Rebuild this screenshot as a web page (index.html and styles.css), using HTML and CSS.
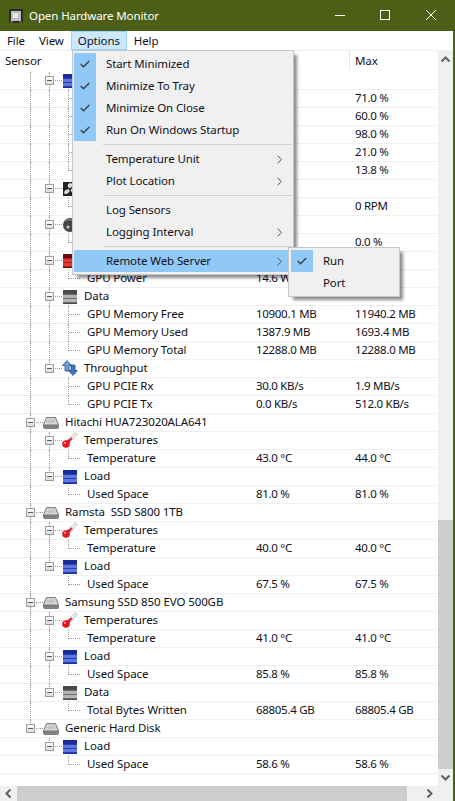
FILE: index.html
```html
<!DOCTYPE html>
<html lang="en">
<head>
    <meta charset="UTF-8">
    <title>Open Hardware Monitor</title>
    <link rel="stylesheet" href="styles.css">
</head>
<body>

<svg class="defs" width="0" height="0">
    <symbol id="load" viewBox="0 0 14 14">
        <rect width="14" height="14" fill="#1a2c98"/>
        <path d="M0 6.5h14M0 10.5h14" stroke="#5f78e0" stroke-width="3"/>
        <path d="M0 4.5h14M0 8.5h14M0 12.5h14" stroke="#2a3fb0"/>
    </symbol>
    <symbol id="data" viewBox="0 0 14 14">
        <rect width="14" height="14" fill="#4a4a4a"/>
        <path d="M0 6.5h14M0 10.5h14" stroke="#b4b4b0" stroke-width="3"/>
        <path d="M0 4.5h14M0 8.5h14M0 12.5h14" stroke="#6c6c6c"/>
    </symbol>
    <symbol id="power" viewBox="0 0 14 14">
        <rect width="14" height="14" fill="#6a0c0c"/>
        <path d="M0 6.5h14M0 10.5h14" stroke="#e03c3c" stroke-width="3"/>
        <path d="M0 4.5h14M0 8.5h14M0 12.5h14" stroke="#a51c1c"/>
    </symbol>
    <symbol id="fan" viewBox="0 0 14 14">
        <rect width="14" height="14" fill="#222"/>
        <path d="M7 7C4 5 4 2 7 1c3 0 3 3 0 6zM7 7c3-1 5 0 6 3-1 3-4 2-6-3zM7 7c0 3-2 5-5 5-2-2 0-5 5-5z" fill="#ddd"/>
        <circle cx="7" cy="7" r="1.2" fill="#222"/>
    </symbol>
    <symbol id="ctrl" viewBox="0 0 14 14">
        <circle cx="7" cy="7" r="7" fill="#454545"/>
        <path d="M1 4a7 7 0 0 1 12 0 9 5 0 0 0-12 0z" fill="#777"/>
        <circle cx="5" cy="9" r="1.5" fill="#cfcfcf"/>
    </symbol>
    <symbol id="thru" viewBox="0 0 16 16">
        <path d="M5 .5 9.500 5.500H7V11H3V5.500H.5z" fill="#6f9fd8" stroke="#1f4f8c" stroke-width=".8"/>
        <path d="M11 15.500 6.500 10.500H9V5h4v5.500h2.500z" fill="#3f78bd" stroke="#1f4f8c" stroke-width=".8"/>
    </symbol>
    <symbol id="temp" viewBox="0 0 16 16">
        <path d="M4.500 8.500 12.800 1c1.200-.8 2.800.7 2 1.900L7.500 11.500z" fill="#f0ecec" stroke="#bdb2b2" stroke-width=".7"/>
        <path d="M4.500 9 9.500 5.500l1 1L7 11z" fill="#d9202a"/>
        <circle cx="4" cy="12" r="3.800" fill="#e0141e"/>
        <circle cx="3" cy="10.800" r="1.100" fill="#f59a9a"/>
    </symbol>
    <symbol id="disk" viewBox="0 0 16 12">
        <path d="M3.500.5h9L15.500 7.500v3a1 1 0 0 1-1 1h-13a1 1 0 0 1-1-1v-3z" fill="#a8a8a8" stroke="#6a6a6a" stroke-width=".8"/>
        <path d="M4 1.200h8l2.500 5.800h-13z" fill="#dcdcdc"/>
        <ellipse cx="8" cy="4.200" rx="4.500" ry="2" fill="#c4c4c4"/>
        <path d="M1 8h14v2.800H1z" fill="#7c7c7c"/>
    </symbol>
    <symbol id="check" viewBox="0 0 10 8">
        <path d="M.7 4l2.800 2.800L9.300 1" fill="none" stroke="#3c4048" stroke-width="1.400"/>
    </symbol>
    <symbol id="more" viewBox="0 0 5 9">
        <path d="M.7.7l3.600 3.800L.7 8.300" fill="none" stroke="#555" stroke-width="1"/>
    </symbol>
</svg>

<div class="win">
    <header class="titlebar">
        <svg class="appicon" width="14" height="14" viewBox="0 0 14 14">
            <rect width="14" height="14" fill="#2b2b26"/>
            <rect x="2" y="2" width="10" height="10" fill="#bdbdbd"/>
            <rect x="4" y="4" width="5" height="5" fill="#e8e8e8"/>
            <path d="M1 13h3M10 13h3" stroke="#a08a2c"/>
        </svg>
        <span class="apptitle">Open Hardware Monitor</span>
        <div class="winbtns">
            <svg class="winbtn" width="46" height="31" viewBox="0 0 46 31"><path d="M18 15.500h10" stroke="#fff"/></svg>
            <svg class="winbtn" width="46" height="31" viewBox="0 0 46 31"><rect x="17.500" y="10.500" width="9" height="9" fill="none" stroke="#fff"/></svg>
            <svg class="winbtn" width="46" height="31" viewBox="0 0 46 31"><path d="M17 10l10 10M27 10l-10 10" stroke="#fff"/></svg>
        </div>
    </header>

    <nav class="menubar">
        <span class="mitem">File</span>
        <span class="mitem">View</span>
        <span class="mitem mopen">Options</span>
        <span class="mitem">Help</span>
    </nav>

    <div class="body">
        <div class="list">
            <div class="listhead">
                <span class="hname">Sensor</span>
                <span class="hval"></span>
                <span class="hmax">Max</span>
            </div>

            <div class="row"><div class="name"><i class="g"></i><i class="nd"><b class="tg"></b></i><svg class="ic"><use href="#load"/></svg></div><span class="val"></span><span class="val"></span></div>
            <div class="row"><div class="name"><i class="g"></i><i class="g"></i><i class="g t"></i></div><span class="val"></span><span class="val">71.0 %</span></div>
            <div class="row"><div class="name"><i class="g"></i><i class="g"></i><i class="g t"></i></div><span class="val"></span><span class="val">60.0 %</span></div>
            <div class="row"><div class="name"><i class="g"></i><i class="g"></i><i class="g t"></i></div><span class="val"></span><span class="val">98.0 %</span></div>
            <div class="row"><div class="name"><i class="g"></i><i class="g"></i><i class="g t"></i></div><span class="val"></span><span class="val">21.0 %</span></div>
            <div class="row"><div class="name"><i class="g"></i><i class="g"></i><i class="g l"></i></div><span class="val"></span><span class="val">13.8 %</span></div>
            <div class="row"><div class="name"><i class="g"></i><i class="nd"><b class="tg"></b></i><svg class="ic"><use href="#fan"/></svg></div><span class="val"></span><span class="val"></span></div>
            <div class="row"><div class="name"><i class="g"></i><i class="g"></i><i class="g l"></i></div><span class="val"></span><span class="val">0 RPM</span></div>
            <div class="row"><div class="name"><i class="g"></i><i class="nd"><b class="tg"></b></i><svg class="ic"><use href="#ctrl"/></svg></div><span class="val"></span><span class="val"></span></div>
            <div class="row"><div class="name"><i class="g"></i><i class="g"></i><i class="g l"></i></div><span class="val"></span><span class="val">0.0 %</span></div>
            <div class="row"><div class="name"><i class="g"></i><i class="nd"><b class="tg"></b></i><svg class="ic"><use href="#power"/></svg></div><span class="val"></span><span class="val"></span></div>
            <div class="row"><div class="name"><i class="g"></i><i class="g"></i><i class="g l"></i>GPU Power</div><span class="val">14.6 W</span><span class="val"></span></div>
            <div class="row"><div class="name"><i class="g"></i><i class="nd"><b class="tg"></b></i><svg class="ic"><use href="#data"/></svg><span class="grp">Data</span></div><span class="val"></span><span class="val"></span></div>
            <div class="row"><div class="name"><i class="g"></i><i class="g"></i><i class="g t"></i>GPU Memory Free</div><span class="val">10900.1 MB</span><span class="val">11940.2 MB</span></div>
            <div class="row"><div class="name"><i class="g"></i><i class="g"></i><i class="g t"></i>GPU Memory Used</div><span class="val">1387.9 MB</span><span class="val">1693.4 MB</span></div>
            <div class="row"><div class="name"><i class="g"></i><i class="g"></i><i class="g l"></i>GPU Memory Total</div><span class="val">12288.0 MB</span><span class="val">12288.0 MB</span></div>
            <div class="row"><div class="name"><i class="g"></i><i class="nd end"><b class="tg"></b></i><svg class="ic wide"><use href="#thru"/></svg><span class="grp near">Throughput</span></div><span class="val"></span><span class="val"></span></div>
            <div class="row"><div class="name"><i class="g"></i><i class="g no"></i><i class="g t"></i>GPU PCIE Rx</div><span class="val">30.0 KB/s</span><span class="val">1.9 MB/s</span></div>
            <div class="row"><div class="name"><i class="g"></i><i class="g no"></i><i class="g l"></i>GPU PCIE Tx</div><span class="val">0.0 KB/s</span><span class="val">512.0 KB/s</span></div>

            <div class="row"><div class="name"><i class="nd top"><b class="tg"></b></i><svg class="ic dk"><use href="#disk"/></svg><span class="dsk">Hitachi HUA723020ALA641</span></div><span class="val"></span><span class="val"></span></div>
            <div class="row"><div class="name"><i class="g"></i><i class="nd"><b class="tg"></b></i><svg class="ic wide"><use href="#temp"/></svg><span class="grp near">Temperatures</span></div><span class="val"></span><span class="val"></span></div>
            <div class="row"><div class="name"><i class="g"></i><i class="g"></i><i class="g l"></i>Temperature</div><span class="val">43.0 °C</span><span class="val">44.0 °C</span></div>
            <div class="row"><div class="name"><i class="g"></i><i class="nd end"><b class="tg"></b></i><svg class="ic"><use href="#load"/></svg><span class="grp">Load</span></div><span class="val"></span><span class="val"></span></div>
            <div class="row"><div class="name"><i class="g"></i><i class="g no"></i><i class="g l"></i>Used Space</div><span class="val">81.0 %</span><span class="val">81.0 %</span></div>

            <div class="row"><div class="name"><i class="nd top"><b class="tg"></b></i><svg class="ic dk"><use href="#disk"/></svg><span class="dsk">Ramsta &nbsp;SSD S800 1TB</span></div><span class="val"></span><span class="val"></span></div>
            <div class="row"><div class="name"><i class="g"></i><i class="nd"><b class="tg"></b></i><svg class="ic wide"><use href="#temp"/></svg><span class="grp near">Temperatures</span></div><span class="val"></span><span class="val"></span></div>
            <div class="row"><div class="name"><i class="g"></i><i class="g"></i><i class="g l"></i>Temperature</div><span class="val">40.0 °C</span><span class="val">40.0 °C</span></div>
            <div class="row"><div class="name"><i class="g"></i><i class="nd end"><b class="tg"></b></i><svg class="ic"><use href="#load"/></svg><span class="grp">Load</span></div><span class="val"></span><span class="val"></span></div>
            <div class="row"><div class="name"><i class="g"></i><i class="g no"></i><i class="g l"></i>Used Space</div><span class="val">67.5 %</span><span class="val">67.5 %</span></div>

            <div class="row"><div class="name"><i class="nd top"><b class="tg"></b></i><svg class="ic dk"><use href="#disk"/></svg><span class="dsk">Samsung SSD 850 EVO 500GB</span></div><span class="val"></span><span class="val"></span></div>
            <div class="row"><div class="name"><i class="g"></i><i class="nd"><b class="tg"></b></i><svg class="ic wide"><use href="#temp"/></svg><span class="grp near">Temperatures</span></div><span class="val"></span><span class="val"></span></div>
            <div class="row"><div class="name"><i class="g"></i><i class="g"></i><i class="g l"></i>Temperature</div><span class="val">41.0 °C</span><span class="val">41.0 °C</span></div>
            <div class="row"><div class="name"><i class="g"></i><i class="nd"><b class="tg"></b></i><svg class="ic"><use href="#load"/></svg><span class="grp">Load</span></div><span class="val"></span><span class="val"></span></div>
            <div class="row"><div class="name"><i class="g"></i><i class="g"></i><i class="g l"></i>Used Space</div><span class="val">85.8 %</span><span class="val">85.8 %</span></div>
            <div class="row"><div class="name"><i class="g"></i><i class="nd end"><b class="tg"></b></i><svg class="ic"><use href="#data"/></svg><span class="grp">Data</span></div><span class="val"></span><span class="val"></span></div>
            <div class="row"><div class="name"><i class="g"></i><i class="g no"></i><i class="g l"></i>Total Bytes Written</div><span class="val">68805.4 GB</span><span class="val">68805.4 GB</span></div>

            <div class="row"><div class="name"><i class="nd top end"><b class="tg"></b></i><svg class="ic dk"><use href="#disk"/></svg><span class="dsk">Generic Hard Disk</span></div><span class="val"></span><span class="val"></span></div>
            <div class="row"><div class="name"><i class="g no"></i><i class="nd end"><b class="tg"></b></i><svg class="ic"><use href="#load"/></svg><span class="grp">Load</span></div><span class="val"></span><span class="val"></span></div>
            <div class="row"><div class="name"><i class="g no"></i><i class="g no"></i><i class="g l"></i>Used Space</div><span class="val">58.6 %</span><span class="val">58.6 %</span></div>
        </div>

        <div class="vbar">
            <svg class="sarrow" width="15" height="17" viewBox="0 0 15 17"><path d="M3.500 10.500l4-4 4 4" fill="none" stroke="#606060" stroke-width="2"/></svg>
            <div class="vspace"></div>
            <div class="vthumb"></div>
            <svg class="sarrow" width="15" height="17" viewBox="0 0 15 17"><path d="M3.500 6.500l4 4 4-4" fill="none" stroke="#606060" stroke-width="2"/></svg>
        </div>
    </div>

    <div class="hbar">
        <svg class="sarrow" width="17" height="15" viewBox="0 0 17 15"><path d="M10.500 3.500l-4 4 4 4" fill="none" stroke="#606060" stroke-width="2"/></svg>
        <div class="hthumb"></div>
        <div class="hspace"></div>
        <svg class="sarrow" width="17" height="15" viewBox="0 0 17 15"><path d="M6.500 3.500l4 4-4 4" fill="none" stroke="#606060" stroke-width="2"/></svg>
        <div class="corner"></div>
    </div>

    <div class="menu optionsmenu">
        <div class="opt"><span class="tick"><svg width="10" height="8"><use href="#check"/></svg></span>Start Minimized</div>
        <div class="opt"><span class="tick"><svg width="10" height="8"><use href="#check"/></svg></span>Minimize To Tray</div>
        <div class="opt"><span class="tick"><svg width="10" height="8"><use href="#check"/></svg></span>Minimize On Close</div>
        <div class="opt"><span class="tick"><svg width="10" height="8"><use href="#check"/></svg></span>Run On Windows Startup</div>
        <div class="sep"></div>
        <div class="opt"><span class="tick none"></span>Temperature Unit<svg class="more" width="5" height="9"><use href="#more"/></svg></div>
        <div class="opt"><span class="tick none"></span>Plot Location<svg class="more" width="5" height="9"><use href="#more"/></svg></div>
        <div class="sep"></div>
        <div class="opt"><span class="tick none"></span>Log Sensors</div>
        <div class="opt"><span class="tick none"></span>Logging Interval<svg class="more" width="5" height="9"><use href="#more"/></svg></div>
        <div class="sep"></div>
        <div class="opt hot"><span class="tick none"></span>Remote Web Server<svg class="more" width="5" height="9"><use href="#more"/></svg></div>
    </div>

    <div class="menu servermenu">
        <div class="opt"><span class="tick"><svg width="10" height="8"><use href="#check"/></svg></span>Run</div>
        <div class="opt"><span class="tick none"></span>Port</div>
    </div>
</div>

</body>
</html>
```

FILE: styles.css
```css
* {
    box-sizing: border-box;
}
html, body {
    margin: 0;
    height: 100%;
    overflow: hidden;
}
body {
    font-family: "Noto Sans", Arial, sans-serif;
    font-size: 11.5px;
    letter-spacing: -0.1px;
    color: #101018;
    background-color: #4d5f17;
}
.defs {
    position: absolute;
}
.win {
    position: relative;
    display: flex;
    flex-direction: column;
    width: 455px;
    height: 801px;
    padding-right: 2px;
    background-color: #4d5f17;
}

.titlebar {
    display: flex;
    align-items: center;
    flex: none;
    height: 31px;
    margin-right: -2px;
    padding-left: 9px;
    color: #fff;
}
.appicon {
    flex: none;
    margin-right: 6px;
}
.winbtns {
    display: flex;
    margin-left: auto;
}
.winbtn {
    display: block;
}

.menubar {
    display: flex;
    flex: none;
    height: 20px;
    border-bottom: 1px solid #f0f0f0;
    background-color: #fff;
    line-height: 17px;
}
.mitem {
    padding: 0 6px;
    border: 1px solid transparent;
}
.mopen {
    background-color: #cce8ff;
    border-color: #99d1ff;
}

.body {
    display: flex;
    flex: 1;
    min-height: 0;
}
.list {
    flex: 1;
    min-width: 0;
    background-color: #fff;
}
.listhead {
    display: flex;
    height: 21px;
    line-height: 20px;
}
.hname {
    width: 250px;
    padding-left: 5px;
}
.hval {
    width: 99px;
}
.hmax {
    height: 19px;
    padding-left: 5px;
    border-left: 1px solid #e5e5e5;
}
.row {
    display: flex;
    height: 18px;
    line-height: 16px;
    box-shadow: inset 0 -1px #f0f0f0;
}
.name {
    display: flex;
    flex: none;
    width: 250px;
    padding-left: 30px;
    white-space: nowrap;
}
.val {
    flex: none;
    width: 99px;
    padding-left: 6px;
    letter-spacing: -0.3px;
    white-space: nowrap;
}

.g, .nd {
    position: relative;
    display: block;
    flex: none;
    height: 18px;
}
.g {
    width: 19px;
}
.g::before, .nd::before {
    content: "";
    position: absolute;
    left: 0;
    top: 0;
    bottom: 0;
    border-left: 1px dotted #999;
}
.g.no::before {
    display: none;
}
.g.l::before, .nd.end::before {
    bottom: 9px;
}
.g.t::after, .g.l::after, .nd::after {
    content: "";
    position: absolute;
    left: 1px;
    top: 8px;
    width: 11px;
    border-top: 1px dotted #999;
}
.nd {
    width: 14px;
}
.nd::after {
    width: 12px;
}
.nd.top {
    width: 13px;
}
.tg {
    position: absolute;
    z-index: 1;
    left: -4px;
    top: 4px;
    width: 9px;
    height: 9px;
    border: 1px solid #9c9c9c;
    background: linear-gradient(#fff, #dcdcdc);
}
.tg::after {
    content: "";
    position: absolute;
    left: 1px;
    top: 3px;
    width: 5px;
    height: 1px;
    background-color: #3f5f8f;
}
.ic {
    position: relative;
    flex: none;
    width: 14px;
    height: 14px;
    margin-top: 2px;
}
.ic.dk {
    width: 16px;
    height: 12px;
    margin-top: 3px;
}
.ic.wide {
    width: 16px;
    height: 16px;
    margin: 0 0 0 -1px;
}
.grp {
    margin-left: 7px;
}
.grp.near {
    margin-left: 6px;
}
.dsk {
    margin-left: 6px;
}

.vbar {
    display: flex;
    flex-direction: column;
    flex: none;
    width: 15px;
    background-color: #f0f0f0;
}
.sarrow {
    display: block;
    flex: none;
}
.vspace {
    height: 452px;
}
.vthumb {
    flex: 1;
    background-color: #cdcdcd;
}
.hbar {
    display: flex;
    flex: none;
    height: 15px;
    background-color: #f0f0f0;
}
.hthumb {
    width: 390px;
    background-color: #cdcdcd;
}
.hspace {
    flex: 1;
}
.corner {
    width: 15px;
}

.menu {
    position: absolute;
    z-index: 5;
    padding: 2px;
    border: 1px solid #c6c6c6;
    background-color: #f0f0f0;
    box-shadow: 4px 4px 3px -1px rgba(0, 0, 0, 0.45);
}
.optionsmenu {
    left: 72px;
    top: 50px;
    width: 222px;
    padding: 2px 1px;
}
.servermenu {
    left: 288px;
    top: 247px;
    width: 112px;
}
.opt {
    display: flex;
    height: 22px;
    line-height: 21px;
    white-space: nowrap;
}
.tick {
    display: flex;
    align-items: center;
    justify-content: center;
    flex: none;
    width: 22px;
    height: 22px;
    margin-right: 10px;
    background-color: #90c8f6;
}
.tick.none {
    background-color: transparent;
}
.more {
    align-self: center;
    margin-left: auto;
    margin-right: 10px;
}
.hot {
    background-color: #90c8f6;
}
.sep {
    height: 1px;
    margin: 3px 0 3px 29px;
    background-color: #d0d0d0;
}
```
